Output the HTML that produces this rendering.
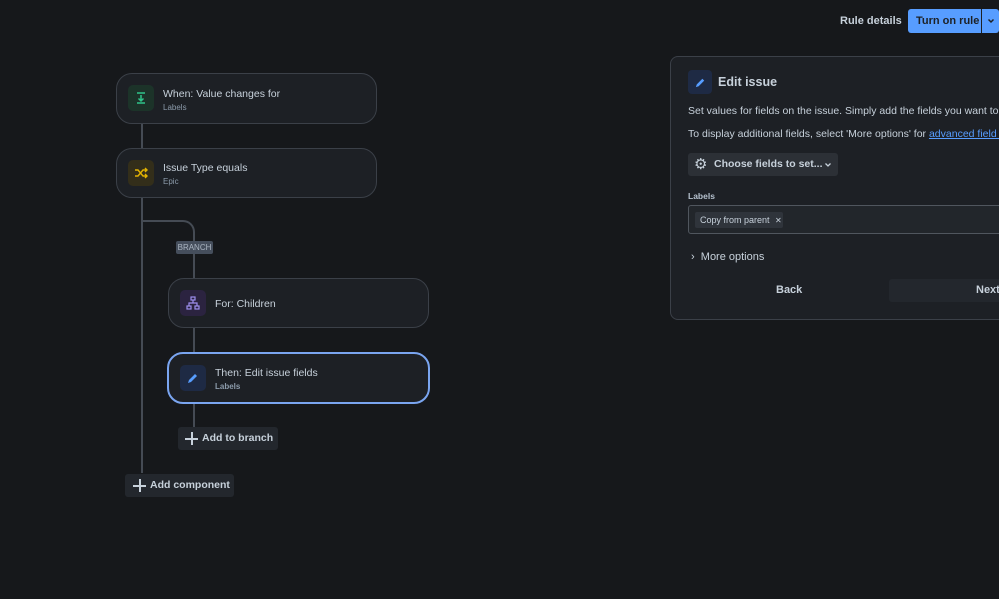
<!DOCTYPE html>
<html><head><meta charset="utf-8"><style>
*{box-sizing:border-box;margin:0;padding:0}
body{width:999px;height:599px;background:#16181b;font-family:"Liberation Sans",sans-serif;position:relative;overflow:hidden;color:#c7d1db}
.a{position:absolute}
.card{position:absolute;background:#1d2025;border:1px solid #3b4048;border-radius:16px}
.ic{position:absolute;left:11px;top:11px;width:26px;height:26px;border-radius:5px;display:flex;align-items:center;justify-content:center}
.t{position:absolute;left:46px;font-size:10.5px;color:#c7d1db}
.s{position:absolute;left:46px;font-size:8px;color:#8c9bab}
.line{position:absolute;background:#454b54}
.btn{position:absolute;background:#23272d;border-radius:3px;font-size:11px;font-weight:bold;color:#c7d1db;white-space:nowrap}
.plus{position:absolute;width:13px;height:13px}
.plus:before{content:"";position:absolute;left:6px;top:0;width:1.5px;height:13px;background:#c7d1db}
.plus:after{content:"";position:absolute;left:0;top:6px;width:13px;height:1.5px;background:#c7d1db}
</style></head><body>
<div class="line" style="left:141px;top:123px;width:2px;height:350px"></div>
<div class="a" style="left:142px;top:220px;width:53px;height:60px;border-top:2px solid #454b54;border-right:2px solid #454b54;border-top-right-radius:12px"></div>
<div class="line" style="left:193px;top:328px;width:2px;height:100px"></div>
<div class="a" style="left:176px;top:241px;width:37px;height:13px;background:#454e5c;border-radius:2px;font-size:8px;color:#aab4c0;text-align:center;line-height:13px">BRANCH</div>

<div class="card" style="left:116px;top:73px;width:261px;height:51px">
<div class="ic" style="background:#1c3329"><svg width="14" height="14" viewBox="0 0 14 14" fill="none" stroke="#2fc48a" stroke-width="1.5"><path d="M3 2h8M3 12h8M7 4v6M4.5 7.5L7 10l2.5-2.5"/></svg></div>
<div class="t" style="top:14px">When: Value changes for</div><div class="s" style="top:29px">Labels</div></div>
<div class="card" style="left:116px;top:148px;width:261px;height:50px">
<div class="ic" style="background:#332e1a"><svg width="14" height="14" viewBox="0 0 14 14" fill="none" stroke="#e2b203" stroke-width="1.4"><path d="M1 4h3l5 6h4M1 10h3l5-6h4M11 2l2 2-2 2M11 8l2 2-2 2"/></svg></div>
<div class="t" style="top:13px">Issue Type equals</div><div class="s" style="top:28px">Epic</div></div>
<div class="card" style="left:168px;top:278px;width:261px;height:50px">
<div class="ic" style="background:#2b2340"><svg width="14" height="14" viewBox="0 0 14 14" fill="none" stroke="#9f8fef" stroke-width="1.2"><rect x="5" y="1" width="4" height="3"/><rect x="1" y="10" width="4" height="3"/><rect x="9" y="10" width="4" height="3"/><path d="M7 4v3M3 10V7h8v3"/></svg></div>
<div class="t" style="top:19px">For: Children</div></div>
<div class="card" style="left:167px;top:352px;width:263px;height:52px;border:2px solid #7aa5f0">
<div class="ic" style="background:#1e2a44"><svg width="14" height="14" viewBox="0 0 14 14"><path d="M2 12l1-3 6-6 2 2-6 6z" fill="#579dff"/></svg></div>
<div class="t" style="top:13px">Then: Edit issue fields</div><div class="s" style="top:28px;font-weight:bold">Labels</div></div>

<div class="btn" style="left:178px;top:427px;width:100px;height:23px"><span class="plus" style="left:7px;top:5px"></span><span class="a" style="left:24px;top:5px;font-size:10.5px">Add to branch</span></div>
<div class="btn" style="left:125px;top:474px;width:109px;height:23px"><span class="plus" style="left:8px;top:5px"></span><span class="a" style="left:25px;top:5px;font-size:10.5px">Add component</span></div>

<div class="a" style="left:840px;top:15px;font-size:11px;font-weight:bold;color:#c7d1db">Rule details</div>
<div class="a" style="left:908px;top:9px;width:91px;height:24px;background:#579dff;border-radius:3px;color:#1d2125;font-size:11px;font-weight:bold;line-height:24px;padding-left:8px;white-space:nowrap">Turn on rule</div>
<div class="a" style="left:981px;top:9px;width:1px;height:24px;background:#1d2125"></div>
<svg class="a" style="left:987px;top:18px" width="8" height="6" viewBox="0 0 8 6"><path d="M1.5 1.5L4 4l2.5-2.5" fill="none" stroke="#1d2125" stroke-width="1.5"/></svg>

<div class="a" style="left:670px;top:56px;width:340px;height:264px;background:#1d2025;border:1px solid #3b4048;border-radius:8px">
<div class="a" style="left:17px;top:13px;width:24px;height:24px;background:#1e2a44;border-radius:4px;display:flex;align-items:center;justify-content:center"><svg width="13" height="13" viewBox="0 0 14 14"><path d="M2 12l1-3 6-6 2 2-6 6z" fill="#579dff"/></svg></div>
<div class="a" style="left:47px;top:18px;font-size:12.5px;font-weight:bold;color:#c7d1db">Edit issue</div>
<div class="a" style="left:17px;top:48px;font-size:10.5px;white-space:nowrap">Set values for fields on the issue. Simply add the fields you want to edit</div>
<div class="a" style="left:17px;top:71px;font-size:10.5px;white-space:nowrap">To display additional fields, select 'More options' for <span style="color:#579dff;text-decoration:underline">advanced field editing</span></div>
<div class="a" style="left:17px;top:96px;width:150px;height:23px;background:#2c3036;border-radius:3px;font-size:10.5px;font-weight:bold;line-height:23px;padding-left:26px;white-space:nowrap">Choose fields to set...
<span class="a" style="left:6px;top:0;font-size:15px;font-weight:normal">⚙</span>
<svg class="a" style="left:136px;top:9px" width="8" height="6" viewBox="0 0 8 6"><path d="M1.5 1.5L4 4l2.5-2.5" fill="none" stroke="#c7d1db" stroke-width="1.3"/></svg></div>
<div class="a" style="left:17px;top:134px;font-size:8.5px;font-weight:bold;color:#b6c2cf">Labels</div>
<div class="a" style="left:17px;top:148px;width:340px;height:29px;background:#22262b;border:1px solid #50565e;border-radius:3px">
<div class="a" style="left:6px;top:6px;width:88px;height:16px;background:#2f343b;border-radius:2px;font-size:9px;line-height:16px;padding-left:5px;white-space:nowrap">Copy from parent <span style="margin-left:3px;font-size:8px">✕</span></div></div>
<div class="a" style="left:20px;top:194px;font-size:11px">›&nbsp;&nbsp;More options</div>
<div class="a" style="left:105px;top:227px;font-size:11px;font-weight:bold">Back</div>
<div class="a" style="left:218px;top:222px;width:130px;height:23px;background:#23272d;border-radius:3px;font-size:11px;font-weight:bold;line-height:23px;padding-left:87px">Next</div>
</div>
</body></html>
